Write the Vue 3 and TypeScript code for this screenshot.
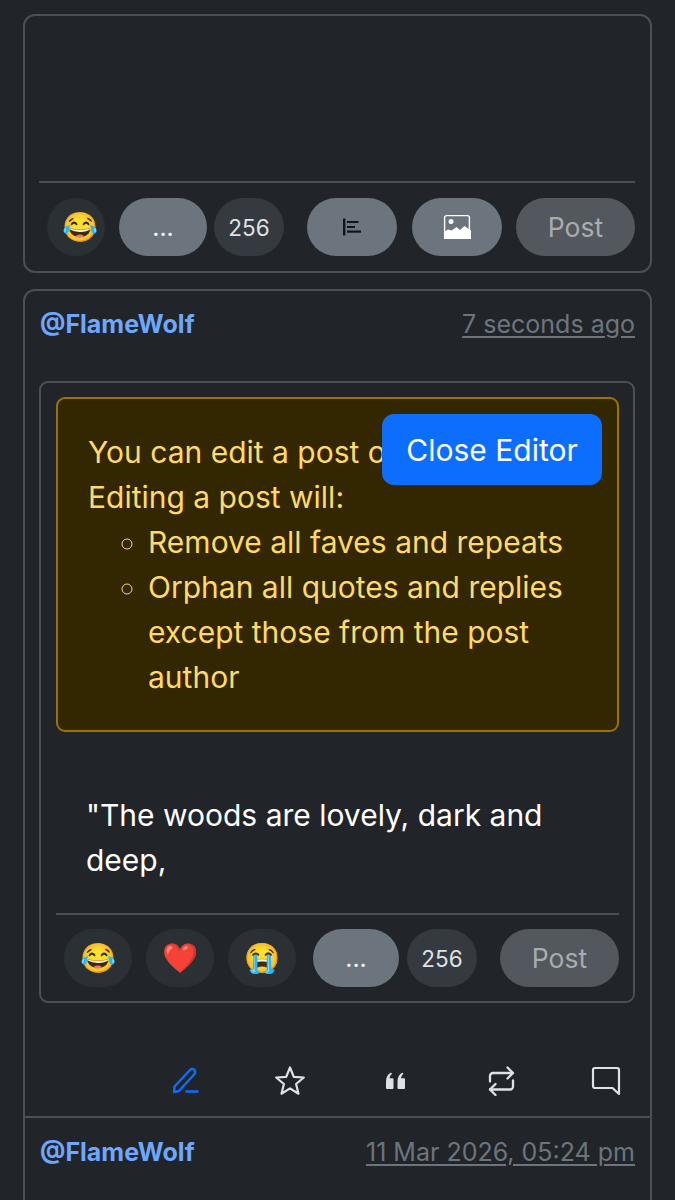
<script setup lang="ts">
const warningItems = [
  'Remove all faves and repeats',
  'Orphan all quotes and replies except those from the post author',
]
const reactions = ['😂', '❤️', '😭']
</script>

<template>
  <div class="page">
    <section class="card composer">
      <div class="blank" />
      <div class="toolbar">
        <button class="pill emoji first">😂</button>
        <button class="pill more">...</button>
        <span class="pill count">256</span>
        <button class="pill tool poll">
          <svg width="20" height="18" viewBox="0 0 20 18" fill="#111417">
            <rect x="1" y="0.500" width="2.400" height="17" />
            <rect x="5" y="3" width="11.500" height="2" />
            <rect x="5" y="8" width="8" height="2" />
            <rect x="5" y="12.500" width="14" height="2.200" />
          </svg>
        </button>
        <button class="pill tool">
          <svg width="28" height="26" viewBox="0 0 28 26">
            <rect x="1.600" y="1.600" width="24.800" height="22.800" rx="2" fill="none" stroke="#fff" stroke-width="1.400" />
            <circle cx="8" cy="7.500" r="2.500" fill="#fff" />
            <path d="M1 25v-7l4-2.500 3.500 1 5-3.500 3.500 3 4.500-4 6.500 4.500V25z" fill="#fff" />
          </svg>
        </button>
        <button class="pill post">Post</button>
      </div>
    </section>

    <section class="card thread">
      <header class="post-head">
        <a class="handle">@FlameWolf</a>
        <a class="stamp">7 seconds ago</a>
      </header>

      <div class="editor">
        <div class="warning">
          <p>You can edit a post once.</p>
          <p>Editing a post will:</p>
          <ul>
            <li v-for="item in warningItems" :key="item">{{ item }}</li>
          </ul>
          <button class="close-btn">Close Editor</button>
        </div>
        <p class="quote-text">"The woods are lovely, dark and deep,</p>
        <div class="toolbar inner">
          <button v-for="r in reactions" :key="r" class="pill emoji wide">{{ r }}</button>
          <button class="pill more short">...</button>
          <span class="pill count">256</span>
          <button class="pill post">Post</button>
        </div>
      </div>

      <div class="actions">
        <svg width="30" height="30" viewBox="0 0 30 30" fill="none" stroke="#0d6efd" stroke-width="2.400" stroke-linecap="round" stroke-linejoin="round">
          <path d="M4.500 20.500 20 4a3 3 0 0 1 4.500 4L9 25l-5 1.200z" />
          <path d="M16.500 25.500h11" />
        </svg>
        <svg width="30" height="30" viewBox="0 0 30 30" fill="none" stroke="#dee2e6" stroke-width="2.200" stroke-linejoin="round">
          <path d="m15 1.500 3.800 9.300 10 .7-7.700 6.500 2.400 9.700-8.500-5.300-8.500 5.300 2.400-9.700-7.700-6.500 10-.7z" />
        </svg>
        <svg width="30" height="30" viewBox="0 0 30 30" fill="#dee2e6">
          <path d="M5 15.500C5 11 6.800 8 10 6.500l1 1.600C9.500 9.200 8.700 10.500 8.600 12.300H11.500a1 1 0 0 1 1 1V22a1 1 0 0 1-1 1H6a1 1 0 0 1-1-1z" />
          <path d="M16.500 15.500c0-4.500 1.800-7.500 5-9l1 1.600c-1.500 1.100-2.300 2.400-2.400 4.200H23a1 1 0 0 1 1 1V22a1 1 0 0 1-1 1h-5.500a1 1 0 0 1-1-1z" />
        </svg>
        <svg width="30" height="30" viewBox="0 0 30 30" fill="none" stroke="#dee2e6" stroke-width="2.300" stroke-linecap="round" stroke-linejoin="round">
          <path d="m21.500 1.500 5.500 5.500-5.500 5.500" />
          <path d="M4 15.500V10a3 3 0 0 1 3-3h20" />
          <path d="m9.500 29-5.500-5.500 5.500-5.500" />
          <path d="M27 14.500v6a3 3 0 0 1-3 3H4" />
        </svg>
        <svg width="30" height="30" viewBox="0 0 30 30" fill="none" stroke="#dee2e6" stroke-width="2.200" stroke-linecap="round" stroke-linejoin="round">
          <path d="M2 4a2 2 0 0 1 2-2h22a2 2 0 0 1 2 2v24l-6.500-6H4a2 2 0 0 1-2-2z" />
        </svg>
      </div>

      <header class="post-head next">
        <a class="handle">@FlameWolf</a>
        <a class="stamp">11 Mar 2026, 05:24 pm</a>
      </header>
    </section>
  </div>
</template>

<style>
html,
body {
  background: #212529;
}
</style>

<style scoped>
.page {
  height: 1200px;
  overflow: hidden;
  box-sizing: border-box;
  padding: 14px 23px 0;
  font-family: Inter, "Liberation Sans", sans-serif;
  color: #dee2e6;
  background: #212529;
}
.card {
  border: 2px solid #495057;
  border-radius: 12px;
}
.composer {
  height: 259px;
  box-sizing: border-box;
  padding: 0 15px 0 14px;
  margin-bottom: 16px;
}
.blank {
  height: 165px;
  border-bottom: 2px solid #495057;
}
.toolbar {
  display: flex;
  align-items: center;
  padding-top: 15px;
}
.pill {
  display: flex;
  align-items: center;
  justify-content: center;
  height: 58px;
  border: 0;
  border-radius: 29px;
  padding: 0;
  font-family: inherit;
  font-size: 25px;
  color: #fff;
}
.emoji {
  width: 58px;
  background: #2b3035;
  font-size: 29px;
  font-family: "Noto Color Emoji", Inter, sans-serif;
}
.first {
  margin-left: 8px;
  padding-left: 9px;
}
.wide {
  width: 68px;
  margin-right: 14px;
}
.wide:first-child {
  margin-left: 8px;
}
.more {
  width: 88px;
  margin-left: 14px;
  background: #6c757d;
}
.short {
  width: 86px;
  margin-left: 3px;
}
.count {
  width: 70px;
  margin-left: 7px;
  background: #343a40;
  color: #dee2e6;
  font-size: 22.500px;
}
.short + .count {
  margin-left: 8px;
}
.tool {
  width: 90px;
  margin-left: 15px;
  background: #6c757d;
}
.poll {
  margin-left: 23px;
}
.post {
  width: 119px;
  margin-left: auto;
  background: #52585d;
  color: #a9acae;
  font-size: 26.500px;
}
.post-head {
  display: flex;
  justify-content: space-between;
  align-items: center;
  height: 66px;
  padding: 0 15px;
}
.handle {
  color: #6ea8fe;
  font-weight: 700;
  font-size: 25px;
}
.stamp {
  color: #6c757d;
  font-size: 25px;
  text-decoration: underline;
  text-underline-offset: 3px;
}
.editor {
  margin: 24px 15px 0 14px;
  padding: 14px 14px 15px 15px;
  height: 622px;
  box-sizing: border-box;
  border: 2px solid #495057;
  border-radius: 9px;
}
.warning {
  position: relative;
  height: 335px;
  box-sizing: border-box;
  padding: 31px 30px;
  border: 2px solid #997404;
  border-radius: 9px;
  background: #332701;
  color: #ffda6a;
  font-size: 30px;
  line-height: 45px;
}
.warning p {
  margin: 0;
}
.warning ul {
  margin: 0;
  padding-left: 60px;
  list-style: circle;
}
.close-btn {
  position: absolute;
  top: 15px;
  right: 15px;
  width: 220px;
  height: 71px;
  border: 0;
  border-radius: 12px;
  background: #0d6efd;
  color: #fff;
  font-family: inherit;
  font-size: 30px;
}
.quote-text {
  margin: 61px 31px 30px 30px;
  color: #fff;
  font-size: 30px;
  line-height: 45px;
}
.inner {
  border-top: 2px solid #495057;
  padding-top: 14px;
}
.actions {
  display: flex;
  gap: 75.250px;
  align-items: center;
  height: 115px;
  box-sizing: border-box;
  padding: 43px 15px 0 145px;
  border-bottom: 2px solid #495057;
}
.next {
  height: 68px;
  margin-bottom: 40px;
}
</style>
